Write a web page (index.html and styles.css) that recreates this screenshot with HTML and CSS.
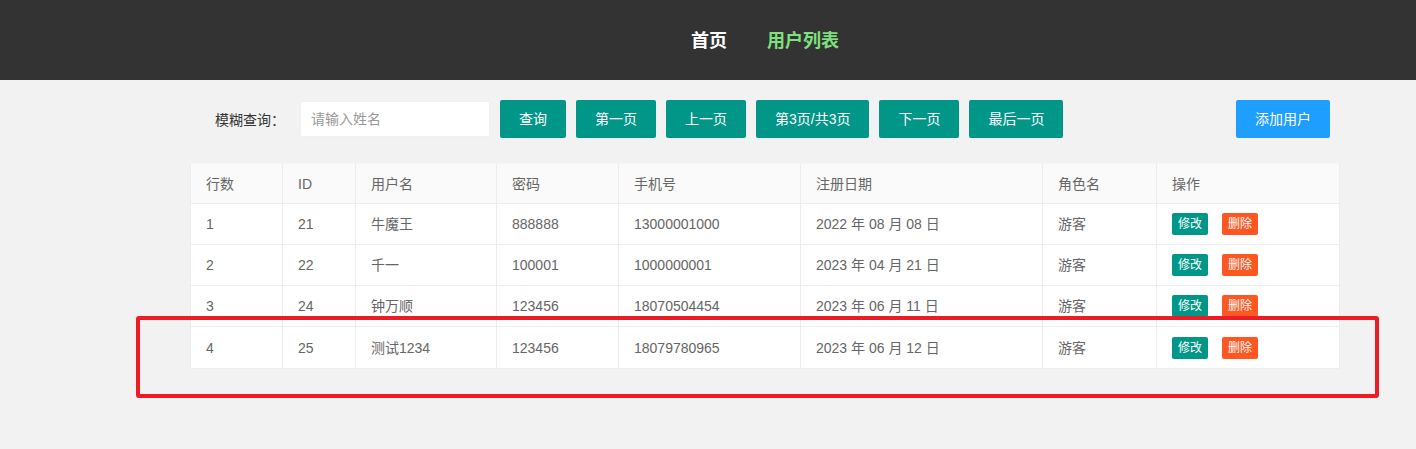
FILE: index.html
```html
<!DOCTYPE html>
<html lang="zh-CN">
<head>
<meta charset="utf-8">
<title>用户列表</title>
<link rel="stylesheet" href="styles.css">
</head>
<body>
<header class="topbar">
  <nav class="nav">
    <a class="nav-link" href="#">首页</a>
    <a class="nav-link nav-active" href="#">用户列表</a>
  </nav>
</header>
<main class="main">
  <div class="toolbar">
    <label class="search-label">模糊查询：</label>
    <input class="search-input" type="text" placeholder="请输入姓名">
    <div class="btn-group">
      <button class="btn">查询</button>
      <button class="btn">第一页</button>
      <button class="btn">上一页</button>
      <button class="btn">第3页/共3页</button>
      <button class="btn">下一页</button>
      <button class="btn">最后一页</button>
    </div>
    <button class="btn btn-blue add-btn">添加用户</button>
  </div>
  <table class="table">
    <colgroup>
      <col class="c1"><col class="c2"><col class="c3"><col class="c4"><col class="c5"><col class="c6"><col class="c7"><col class="c8">
    </colgroup>
    <thead>
      <tr><th>行数</th><th>ID</th><th>用户名</th><th>密码</th><th>手机号</th><th>注册日期</th><th>角色名</th><th>操作</th></tr>
    </thead>
    <tbody>
      <tr><td>1</td><td>21</td><td>牛魔王</td><td>888888</td><td>13000001000</td><td>2022 年 08 月 08 日</td><td>游客</td><td><span class="ops"><button class="xs xs-edit">修改</button><button class="xs xs-del">删除</button></span></td></tr>
      <tr><td>2</td><td>22</td><td>千一</td><td>100001</td><td>1000000001</td><td>2023 年 04 月 21 日</td><td>游客</td><td><span class="ops"><button class="xs xs-edit">修改</button><button class="xs xs-del">删除</button></span></td></tr>
      <tr><td>3</td><td>24</td><td>钟万顺</td><td>123456</td><td>18070504454</td><td>2023 年 06 月 11 日</td><td>游客</td><td><span class="ops"><button class="xs xs-edit">修改</button><button class="xs xs-del">删除</button></span></td></tr>
      <tr class="last"><td>4</td><td>25</td><td>测试1234</td><td>123456</td><td>18079780965</td><td>2023 年 06 月 12 日</td><td>游客</td><td><span class="ops"><button class="xs xs-edit">修改</button><button class="xs xs-del">删除</button></span></td></tr>
    </tbody>
  </table>
</main>
<div class="annotation"></div>
</body>
</html>
```
FILE: styles.css
```css
* { box-sizing: border-box; }
html, body { margin: 0; padding: 0; }
body {
  background: #f2f2f2;
  font-family: "Liberation Sans", "Noto Sans CJK SC", sans-serif;
  font-size: 14px;
  color: #333;
  position: relative;
  min-height: 449px;
}
.topbar {
  height: 80px;
  background: #333333;
  display: flex;
  align-items: center;
}
.nav {
  margin-left: 691px;
  display: flex;
  gap: 40px;
}
.nav-link {
  color: #ffffff;
  text-decoration: none;
  font-size: 18px;
  font-weight: bold;
  line-height: 24px;
  margin-top: 2px;
}
.nav-active { color: #7fe07f; }
.main {
  width: 1149px;
  margin-left: 190px;
  padding-top: 20px;
}
.toolbar {
  display: flex;
  align-items: center;
  height: 38px;
  padding-left: 25px;
  padding-right: 9px;
}
.search-label {
  width: 85px;
  color: #333;
  font-size: 14px;
}
.search-input {
  width: 190px;
  height: 36px;
  border: 1px solid #f0f0f0;
  background: #fff;
  padding: 0 10px;
  font-family: inherit;
  font-size: 14px;
  outline: none;
  border-radius: 2px;
}
.search-input::placeholder { color: #999; }
.btn-group {
  display: flex;
  gap: 10px;
  margin-left: 10px;
}
.btn {
  height: 38px;
  line-height: 36px;
  padding: 0 18px;
  border: 1px solid transparent;
  border-radius: 2px;
  background: #009688;
  color: #fff;
  font-family: inherit;
  font-size: 14px;
  white-space: nowrap;
  cursor: pointer;
}
.btn-blue { background: #1e9fff; }
.add-btn { margin-left: auto; }
.table {
  margin-top: 25px;
  width: 1149px;
  border-collapse: collapse;
  table-layout: fixed;
  background: #fff;
  color: #666;
}
.c1 { width: 92px; }
.c2 { width: 73px; }
.c3 { width: 141px; }
.c4 { width: 122px; }
.c5 { width: 182px; }
.c6 { width: 242px; }
.c7 { width: 114px; }
.c8 { width: 183px; }
.table th, .table td {
  border: 1px solid #ededed;
  padding: 0 15px;
  text-align: left;
  font-weight: normal;
  font-size: 14px;
  line-height: 20px;
  white-space: nowrap;
  vertical-align: middle;
}
.table th {
  background: #fafafa;
  height: 40px;
}
.table td { height: 41px; }
.table tr.last td { height: 42px; }
.table tr:first-child th { border-top-color: #f6f6f6; }
.ops {
  display: flex;
  gap: 14px;
  align-items: center;
}
.xs {
  height: 22px;
  line-height: 20px;
  padding: 0 5px;
  border: 1px solid transparent;
  border-radius: 2px;
  font-family: inherit;
  font-size: 12px;
  color: #fff;
  cursor: pointer;
}
.xs-edit { background: #009688; }
.xs-del { background: #ff5722; }
.annotation {
  position: absolute;
  left: 136px;
  top: 316px;
  width: 1243px;
  height: 82px;
  border: 4px solid #ed1c24;
  border-radius: 3px;
  pointer-events: none;
}
```
